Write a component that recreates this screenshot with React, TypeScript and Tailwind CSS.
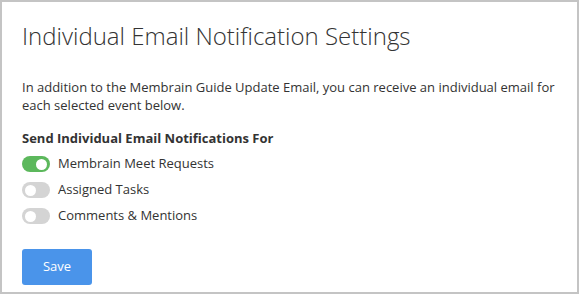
import React, { useState } from "react";

function Toggle({ on, onClick }: { on: boolean; onClick: () => void }) {
  return (
    <button
      type="button"
      onClick={onClick}
      className={`relative h-[16px] w-[28px] shrink-0 rounded-full ${on ? "bg-[#5cb85c]" : "bg-[#d4d4d4]"}`}
    >
      <span
        className={`absolute top-[2.5px] h-[11px] w-[11px] rounded-full bg-white ${on ? "left-[14px]" : "left-[3px]"}`}
      />
    </button>
  );
}

export default function App() {
  const [items, setItems] = useState([
    { label: "Membrain Meet Requests", on: true },
    { label: "Assigned Tasks", on: false },
    { label: "Comments & Mentions", on: false },
  ]);
  return (
    <div className="h-[294px] w-[579px] border-2 border-[#c4c4c4] bg-white px-[20px] pt-[18px] text-[#333] [font-family:'Open_Sans',sans-serif]">
      <h1 className="text-[24px] font-light leading-[32px] text-[#333]">
        Individual Email Notification Settings
      </h1>
      <p className="mt-[26px] text-[13px] leading-[18px]">
        In addition to the Membrain Guide Update Email, you can receive an individual email for each selected event below.
      </p>
      <div className="mt-[15px] text-[13px] font-bold leading-[18px]">
        Send Individual Email Notifications For
      </div>
      <div className="mt-[4px] flex flex-col">
        {items.map((it, i) => (
          <div key={i} className="flex h-[26px] items-center gap-[8px] text-[13px]">
            <Toggle
              on={it.on}
              onClick={() =>
                setItems(items.map((x, j) => (j === i ? { ...x, on: !x.on } : x)))
              }
            />
            <span>{it.label}</span>
          </div>
        ))}
      </div>
      <button
        type="button"
        className="mt-[20px] h-[36px] w-[70px] rounded-[3px] bg-[#4a94ea] text-[13px] text-white"
      >
        Save
      </button>
    </div>
  );
}
